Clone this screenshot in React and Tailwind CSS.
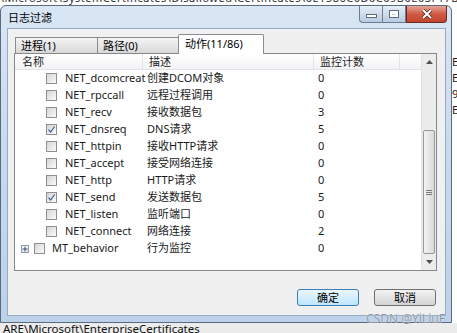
import React from 'react'

const FONT = '"Noto Sans", "Noto Sans CJK SC", sans-serif'

const rows = [
  ['NET_dcomcreat', '创建DCOM对象', 0, false],
  ['NET_rpccall', '远程过程调用', 0, false],
  ['NET_recv', '接收数据包', 3, false],
  ['NET_dnsreq', 'DNS请求', 5, true],
  ['NET_httpin', '接收HTTP请求', 0, false],
  ['NET_accept', '接受网络连接', 0, false],
  ['NET_http', 'HTTP请求', 0, false],
  ['NET_send', '发送数据包', 5, true],
  ['NET_listen', '监听端口', 0, false],
  ['NET_connect', '网络连接', 2, false],
]

function Check({ on }) {
  return (
    <span className="w-[11px] h-[11px] shrink-0 border border-[#8f8f8f] bg-gradient-to-br from-[#d6d6d6] to-[#fafafa] flex items-center justify-center">
      {on && (
        <svg width="9" height="9" viewBox="0 0 9 9">
          <path d="M1.5 4.6 L3.6 7 L7.6 1.5" fill="none" stroke="#3d5a98" strokeWidth="1.2" />
        </svg>
      )}
    </span>
  )
}

function Tab({ label, active, w, pl }) {
  if (active) {
    return (
      <div style={{ width: w }} className="h-[20px] -mb-[1px] relative z-10 border border-b-0 border-[#898c95] rounded-t-[2px] bg-white text-[11px] leading-[17px]">
        <span style={{ paddingLeft: pl }} className="block">{label}</span>
      </div>
    )
  }
  return (
    <div style={{ width: w }} className="h-[16px] border border-b-0 border-r-0 border-[#898c95] bg-gradient-to-b from-[#f3f3f3] to-[#d9d9d9] text-[11px] leading-[15px]">
      <span style={{ paddingLeft: pl }} className="block">{label}</span>
    </div>
  )
}

export default function App() {
  return (
    <div className="w-[457px] h-[333px] overflow-hidden bg-white flex flex-col relative" style={{ fontFamily: FONT }}>
      {/* window behind, top edge */}
      <div className="h-[5px] overflow-hidden shrink-0">
        <div className="-mt-[8px] text-[11px] leading-[12px] text-[#333] whitespace-nowrap tracking-[0.5px]">
          \Microsoft\SystemCertificates\Disallowed\Certificates\0E1586C0D0C09B0E03F17BA9C7B1A0E0FA1D3CA8E
        </div>
      </div>

      <div className="flex shrink-0">
        {/* dialog window */}
        <div className="w-[452px] h-[318px] shrink-0 rounded-t-[6px] border border-[#5a6b80] bg-gradient-to-b from-[#d9e6f4] via-[#c6d9ee] to-[#bcd2ea] flex flex-col">
          {/* title bar */}
          <div className="h-[22px] flex items-start shrink-0">
            <span className="pl-[7px] pt-[5px] text-[11px] text-black leading-[14px]">日志过滤</span>
            <div className="ml-auto mr-[4px] flex">
              <div className="w-[24px] h-[17px] border border-[#6b7c92] border-t-0 rounded-bl-[4px] bg-gradient-to-b from-[#e6eef7] to-[#b9cbe0] flex items-end justify-center pb-[4px]">
                <span className="w-[9px] h-[2px] bg-white border border-[#5d6d80] box-content" />
              </div>
              <div className="w-[23px] h-[17px] border-b border-r border-[#6b7c92] bg-gradient-to-b from-[#e6eef7] to-[#b9cbe0] flex items-center justify-center">
                <span className="w-[8px] h-[6px] border-2 border-t-[3px] border-white outline outline-1 outline-[#5d6d80]" />
              </div>
              <div className="w-[41px] h-[17px] border border-t-0 border-[#6e2a22] rounded-br-[4px] bg-gradient-to-b from-[#e3a596] via-[#cf5a45] to-[#c0452c] flex items-center justify-center">
                <svg width="12" height="10" viewBox="0 0 12 10">
                  <path d="M2 1 L10 9 M10 1 L2 9" stroke="#5a1e16" strokeWidth="3.4" />
                  <path d="M2 1 L10 9 M10 1 L2 9" stroke="#fff" strokeWidth="2" />
                </svg>
              </div>
            </div>
          </div>

          {/* client area */}
          <div className="ml-[6px] mr-[5px] h-[288px] bg-[#f0f0f0] border border-[#97aac2] flex flex-col">
            {/* tabs */}
            <div className="flex items-end pl-[7px] pt-[5px]">
              <Tab label="进程(1)" w={82} pl={5} />
              <Tab label="路径(0)" w={81} pl={5} />
              <Tab label="动作(11/86)" w={86} pl={6} active />
            </div>

            {/* list view */}
            <div className="ml-[6px] w-[423px] h-[218px] border border-[#828790] bg-white flex text-[11px] text-[#1a1a1a]">
              <div className="flex-1 flex flex-col">
                <div className="h-[16px] flex bg-gradient-to-b from-white to-[#f2f3f5] border-b border-[#e2e3e6] leading-[15px] text-[#222]">
                  <div className="w-[128px] pl-[7px] border-r border-[#e3e4e8]">名称</div>
                  <div className="w-[171px] pl-[6px] border-r border-[#e3e4e8]">描述</div>
                  <div className="w-[86px] pl-[6px] border-r border-[#e3e4e8]">监控计数</div>
                  <div className="flex-1" />
                </div>
                {rows.map(([name, desc, n, on]) => (
                  <div key={name} className="h-[17px] flex items-center">
                    <div className="w-[128px] pl-[31px] flex items-center gap-[8px]">
                      <Check on={on} />
                      <span>{name}</span>
                    </div>
                    <div className="w-[171px] pl-[4px]">{desc}</div>
                    <div className="w-[86px] pl-[4px]">{n}</div>
                  </div>
                ))}
                <div className="h-[17px] flex items-center">
                  <div className="w-[128px] pl-[6px] flex items-center">
                    <span className="w-[8px] h-[8px] border border-[#8b9bb0] bg-gradient-to-b from-white to-[#dfe5ec] flex items-center justify-center">
                      <svg width="6" height="6" viewBox="0 0 6 6">
                        <path d="M0.5 3 H5.5 M3 0.5 V5.5" stroke="#3a4b66" strokeWidth="1" />
                      </svg>
                    </span>
                    <span className="ml-[5px]"><Check on={false} /></span>
                    <span className="ml-[7px]">MT_behavior</span>
                  </div>
                  <div className="w-[171px] pl-[4px]">行为监控</div>
                  <div className="w-[86px] pl-[4px]">0</div>
                </div>
              </div>

              {/* scrollbar */}
              <div className="w-[15px] bg-[#ececec] border-l border-[#e3e3e3] flex flex-col">
                <div className="h-[16px] flex items-center justify-center">
                  <svg width="7" height="4" viewBox="0 0 7 4"><path d="M0 4 L3.5 0 L7 4 Z" fill="#505050" /></svg>
                </div>
                <div className="flex-1 flex flex-col pt-[60px]">
                  <div className="flex-1 mx-[1px] rounded-[2px] border border-[#989898] bg-gradient-to-r from-[#f3f3f3] to-[#d8d8d8] flex flex-col items-center justify-center gap-[1px]">
                    <span className="w-[6px] h-[1px] bg-[#7a7a7a]" />
                    <span className="w-[6px] h-[1px] bg-[#7a7a7a]" />
                    <span className="w-[6px] h-[1px] bg-[#7a7a7a]" />
                  </div>
                </div>
                <div className="h-[16px] flex items-center justify-center">
                  <svg width="7" height="4" viewBox="0 0 7 4"><path d="M0 0 L3.5 4 L7 0 Z" fill="#505050" /></svg>
                </div>
              </div>
            </div>

            {/* buttons */}
            <div className="mt-[18px] flex justify-end gap-[15px] pr-[9px] text-[11px]">
              <button className="w-[62px] h-[17px] rounded-[3px] border border-[#3c7fb1] bg-gradient-to-b from-[#eaf6fd] to-[#bee6fd] leading-[15px] text-black">确定</button>
              <button className="w-[62px] h-[17px] rounded-[3px] border border-[#707070] bg-gradient-to-b from-[#f2f2f2] to-[#d4d4d4] leading-[15px] text-black">取消</button>
            </div>
          </div>
        </div>

        {/* window behind, right edge */}
        <div className="flex-1 overflow-hidden bg-white text-[11px] text-[#222] leading-[16px] pt-[49px]">
          <div>E</div>
          <div>E</div>
          <div>9</div>
          <div>E</div>
        </div>
      </div>

      {/* window behind, bottom edge */}
      <div className="flex-1 bg-[#ececec] overflow-hidden">
        <div className="pl-[3px] text-[11.5px] text-[#111] leading-[12px] whitespace-nowrap">ARE\Microsoft\EnterpriseCertificates</div>
      </div>

      {/* watermark */}
      <div className="absolute left-[366px] top-[310px] text-[12px] text-[#8e98a3] whitespace-nowrap" style={{ textShadow: '0 0 1px #fff' }}>
        CSDN @YiLiuF
      </div>
    </div>
  )
}
